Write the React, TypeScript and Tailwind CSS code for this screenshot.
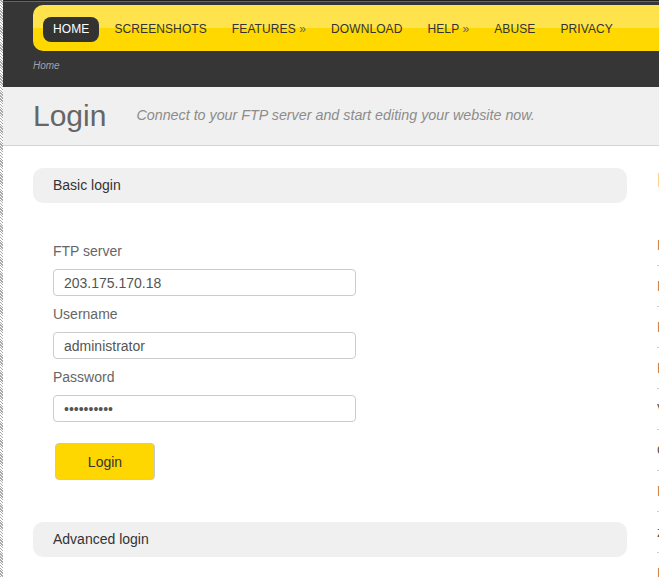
const navItems = [
  { label: "SCREENSHOTS" },
  { label: "FEATURES", more: true },
  { label: "DOWNLOAD" },
  { label: "HELP", more: true },
  { label: "ABUSE" },
  { label: "PRIVACY" },
];

const sideLinks = [
  { text: "FTP client online", dark: false },
  { text: "Browser based FTP", dark: false },
  { text: "Edit files online", dark: false },
  { text: "Resume uploads", dark: false },
  { text: "View images", dark: true },
  { text: "Online zip tools", dark: true },
  { text: "Permissions", dark: false },
  { text: "zip archives", dark: true },
  { text: "Bookmarks", dark: false },
];

function Panel({ title }: { title: string }) {
  return (
    <div className="h-[35px] rounded-[10px] bg-[#f0f0f0] pl-[20px] text-[14px] leading-[34px] text-[#333]">
      {title}
    </div>
  );
}

function Field({ label, value, type = "text" }: { label: string; value: string; type?: string }) {
  return (
    <div>
      <label className="mt-[8px] mb-[8px] block text-[14px] leading-[20px] text-[#666]">{label}</label>
      <input
        type={type}
        value={value}
        readOnly
        className="h-[27px] w-[303px] rounded-[4px] border border-[#ccc] bg-white px-[10px] text-[14px] text-[#555] outline-none"
      />
    </div>
  );
}

export default function App() {
  return (
    <div className="flex min-h-screen w-full overflow-hidden bg-white font-['Liberation_Sans',Arial,sans-serif]">
      <div className="w-[3px] shrink-0 bg-[repeating-linear-gradient(45deg,#a8a8a8_0_1px,#fff_1px_2px)]" />

      <div className="min-w-0 flex-1">
        {/* top bar */}
        <header className="h-[87px] bg-[#363636]">
          <div className="h-[1px] bg-[#222]" />
          <div className="h-[1px] bg-[#666]" />
          <div className="pl-[30px] pt-[3px]">
            <nav className="flex h-[46px] items-start gap-[5px] rounded-l-[10px] bg-[linear-gradient(#ffe34d_50%,#ffd800_50%)] pl-[10px] pt-[12px] text-[12px] leading-[25px] tracking-[0.1px] whitespace-nowrap text-[#333]">
              <a href="#" className="rounded-[8px] bg-[#333] px-[10px] text-white">
                HOME
              </a>
              {navItems.map((item) => (
                <a key={item.label} href="#" className="px-[10px]">
                  {item.label}
                  {item.more && <span className="text-[#666]"> »</span>}
                </a>
              ))}
            </nav>
            <div className="mt-[8px] text-[10px] leading-[14px] text-[#a0a0a8] italic">Home</div>
          </div>
        </header>

        {/* title */}
        <div className="flex h-[59px] items-center border-b border-[#d4d4d4] bg-[#f0f0f0] px-[30px]">
          <h1 className="text-[30px] leading-[34px] text-[#666]">Login</h1>
          <p className="ml-[30px] text-[14.3px] text-[#8c8c8c] italic whitespace-nowrap">
            Connect to your FTP server and start editing your website now.
          </p>
        </div>

        {/* content */}
        <div className="flex pl-[30px] pt-[22px]">
          <div className="w-[594px] shrink-0">
            <Panel title="Basic login" />
            <form className="pl-[20px] pt-[30px]">
              <Field label="FTP server" value="203.175.170.18" />
              <Field label="Username" value="administrator" />
              <Field label="Password" value="**********" type="password" />
              <button
                type="button"
                className="mt-[21px] ml-[2px] h-[37px] w-[100px] rounded-[4px] border border-[#c8c8c8] bg-[#ffd700] pt-[1px] text-[14px] text-[#333]"
              >
                Login
              </button>
            </form>
            <div className="mt-[42px]">
              <Panel title="Advanced login" />
            </div>
          </div>

          <aside className="ml-[30px] w-[220px] shrink-0 whitespace-nowrap">
            <h3 className="text-[21px] leading-[24px] text-[#b5714a]">Features</h3>
            <ul className="mt-[33px]">
              {sideLinks.map((l) => (
                <li
                  key={l.text}
                  className={`border-b border-dotted border-[#ccc] py-[10px] text-[14px] leading-[20px] ${l.dark ? "text-[#555]" : "text-[#b5714a]"}`}
                >
                  {l.text}
                </li>
              ))}
            </ul>
          </aside>
        </div>
      </div>
    </div>
  );
}
